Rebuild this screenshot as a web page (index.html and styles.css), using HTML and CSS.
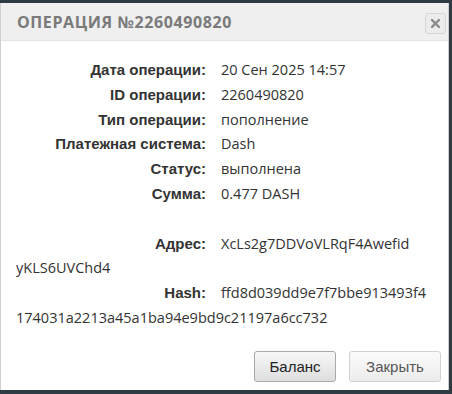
FILE: index.html
```html
<!DOCTYPE html>
<html lang="ru">
<head>
<meta charset="utf-8">
<link rel="stylesheet" href="styles.css">
</head>
<body>
<div class="dialog">
  <div class="header">
    <div class="title">Операция №2260490820</div>
    <div class="close"><svg class="close-icon" width="9" height="9" viewBox="0 0 9 9"><path d="M1 1 L8 8 M8 1 L1 8" stroke="#8c8c8c" stroke-width="2.4" stroke-linecap="square" fill="none"/></svg></div>
  </div>
  <div class="content">
    <div class="row"><span class="label">Дата операции:</span><span class="value">20 Сен 2025 14:57</span></div>
    <div class="row"><span class="label">ID операции:</span><span class="value">2260490820</span></div>
    <div class="row"><span class="label">Тип операции:</span><span class="value">пополнение</span></div>
    <div class="row"><span class="label">Платежная система:</span><span class="value">Dash</span></div>
    <div class="row"><span class="label">Статус:</span><span class="value">выполнена</span></div>
    <div class="row"><span class="label">Сумма:</span><span class="value">0.477 DASH</span></div>
    <div class="row spacer"></div>
    <div class="row"><span class="label">Адрес:</span><span class="value">XcLs2g7DDVoVLRqF4Awefid<wbr>yKLS6UVChd4</span></div>
    <div class="row"><span class="label">Hash:</span><span class="value">ffd8d039dd9e7f7bbe913493f4<wbr>174031a2213a45a1ba94e9bd9c21197a6cc732</span></div>
  </div>
  <div class="footer">
    <button class="btn btn-primary">Баланс</button>
    <button class="btn btn-light">Закрыть</button>
  </div>
</div>
</body>
</html>
```

FILE: styles.css
```css
html, body {
  margin: 0;
  padding: 0;
}
body {
  background: #2e3b42;
  width: 452px;
  height: 394px;
  overflow: hidden;
  padding-top: 3px;
  box-sizing: border-box;
}
.dialog {
  width: 449px;
  height: 387px;
  background: #fff;
  border-left: 1px solid #cfcfcf;
  border-right: 1px solid #cfcfcf;
  box-sizing: border-box;
  display: flex;
  flex-direction: column;
}
.header {
  height: 38px;
  background: #efefef;
  border-bottom: 1px solid #e2e2e2;
  box-sizing: border-box;
  display: flex;
  align-items: center;
  justify-content: space-between;
  padding: 0 2px 0 16px;
}
.title {
  font-family: "Open Sans", sans-serif;
  font-weight: 700;
  font-size: 16px;
  letter-spacing: 0.6px;
  color: #7a7a7a;
  text-transform: uppercase;
}
.close {
  width: 19px;
  height: 19px;
  border: 1px solid #d6d6d6;
  border-radius: 3px;
  background: #ececec;
  display: flex;
  align-items: center;
  justify-content: center;
  margin-top: 3px;
}
.close-icon {
  display: block;
}
.content {
  padding: 17px 10px 0 15px;
  flex: 1;
}
.row {
  line-height: 24.8px;
  min-height: 24.8px;
}
.label {
  display: inline-block;
  width: 190px;
  text-align: right;
  margin-right: 15px;
  font-family: "Liberation Sans", Arial, sans-serif;
  font-weight: 700;
  font-size: 15px;
  color: #333;
}
.value {
  font-family: "Open Sans", sans-serif;
  font-size: 14.5px;
  color: #333;
}
.footer {
  display: flex;
  justify-content: flex-end;
  gap: 13px;
  padding: 0 7px 8px 0;
}
.btn {
  height: 31px;
  border-radius: 3px;
  font-family: "Liberation Sans", Arial, sans-serif;
  font-size: 15px;
  padding: 0;
  cursor: pointer;
}
.btn-primary {
  width: 82px;
  border: 1px solid #a9a9a9;
  background: linear-gradient(#f7f7f7, #dedede);
  color: #222;
}
.btn-light {
  width: 92px;
  border: 1px solid #d2d2d2;
  background: linear-gradient(#fbfbfb, #ececec);
  color: #555;
}
```
